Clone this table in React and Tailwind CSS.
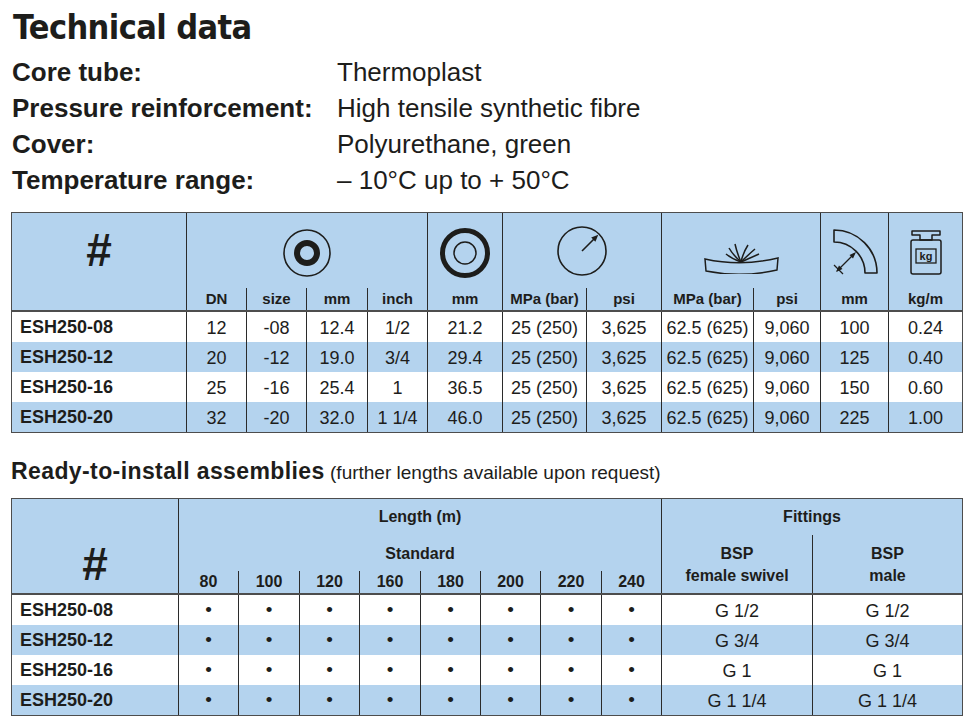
import React from "react";

const LINE = "border-l border-[#2b2b2b]";
const BLUE = "bg-[#b4d3ee]";

const techRows = [
  ["ESH250-08", "12", "-08", "12.4", "1/2", "21.2", "25 (250)", "3,625", "62.5 (625)", "9,060", "100", "0.24"],
  ["ESH250-12", "20", "-12", "19.0", "3/4", "29.4", "25 (250)", "3,625", "62.5 (625)", "9,060", "125", "0.40"],
  ["ESH250-16", "25", "-16", "25.4", "1", "36.5", "25 (250)", "3,625", "62.5 (625)", "9,060", "150", "0.60"],
  ["ESH250-20", "32", "-20", "32.0", "1 1/4", "46.0", "25 (250)", "3,625", "62.5 (625)", "9,060", "225", "1.00"],
];

const lengths = ["80", "100", "120", "160", "180", "200", "220", "240"];

const assemblies = [
  ["ESH250-08", "G 1/2"],
  ["ESH250-12", "G 3/4"],
  ["ESH250-16", "G 1"],
  ["ESH250-20", "G 1 1/4"],
];

const specs = [
  ["Core tube:", "Thermoplast"],
  ["Pressure reinforcement:", "High tensile synthetic fibre"],
  ["Cover:", "Polyurethane, green"],
  ["Temperature range:", "– 10°C up to + 50°C"],
];

function InnerDiameterIcon() {
  return (
    <svg width="50" height="50" viewBox="0 0 50 50" fill="none" stroke="#1d1d1b">
      <circle cx="25" cy="25" r="23" strokeWidth="1.6" />
      <circle cx="25" cy="25" r="10" strokeWidth="6" />
    </svg>
  );
}

function OuterDiameterIcon() {
  return (
    <svg width="52" height="52" viewBox="0 0 52 52" fill="none" stroke="#1d1d1b">
      <circle cx="26" cy="26" r="22.5" strokeWidth="5" />
      <circle cx="26" cy="26" r="11" strokeWidth="1.5" />
    </svg>
  );
}

function PressureIcon() {
  return (
    <svg width="52" height="52" viewBox="0 0 52 52" fill="none" stroke="#1d1d1b">
      <circle cx="26" cy="26" r="24" strokeWidth="1.6" />
      <line x1="26" y1="26" x2="38" y2="14" strokeWidth="1.6" />
      <polygon points="42.3,9.7 39.4,16.7 35.2,12.5" fill="#1d1d1b" stroke="none" />
    </svg>
  );
}

function BurstIcon() {
  return (
    <svg width="80" height="46" viewBox="0 0 80 46" fill="none" stroke="#1d1d1b" strokeWidth="1.5">
      <path d="M4 31 Q40 39 77 30 L76 42 Q40 50 5 43 Z" fill="none" />
      <path d="M40 34 Q31 31 25 26" />
      <path d="M40 34 Q32 27 28 20" />
      <path d="M40 34 Q36 25 34 16" />
      <path d="M40 34 Q42 25 47 17" />
      <path d="M40 34 Q47 27 54 21" />
      <path d="M40 34 Q49 30 58 26" />
    </svg>
  );
}

function BendIcon() {
  return (
    <svg width="50" height="48" viewBox="0 0 50 48" fill="none" stroke="#1d1d1b" strokeWidth="1.6">
      <path d="M4 1 A43 43 0 0 1 47 44 L35 44 A31 31 0 0 0 4 13 Z" strokeLinejoin="round" />
      <line x1="7" y1="42" x2="24" y2="25" strokeWidth="1.3" />
      <polygon points="26,23 19.5,26 23,29.5" fill="#1d1d1b" stroke="none" />
      <polygon points="6,43 12.5,40 9,36.5" fill="#1d1d1b" stroke="none" />
      <line x1="4" y1="36" x2="13" y2="45" strokeWidth="1.3" />
    </svg>
  );
}

function WeightIcon() {
  return (
    <svg width="34" height="48" viewBox="0 0 34 48" fill="none" stroke="#1d1d1b" strokeWidth="1.5">
      <path d="M3 2 H31 V6 H23 V11 H11 V6 H3 Z" strokeLinejoin="round" />
      <rect x="2" y="11" width="30" height="34" rx="2" />
      <rect x="7" y="20" width="20" height="14" strokeWidth="1.3" />
      <text
        x="17"
        y="31"
        textAnchor="middle"
        fontSize="11"
        fontWeight="700"
        fontFamily="Liberation Sans, Arial, sans-serif"
        fill="#1d1d1b"
        stroke="none"
      >
        kg
      </text>
    </svg>
  );
}

function TechTable() {
  const cols = "grid-cols-[174px_60px_60px_61px_60px_75px_84px_75px_92px_67px_68px_74px]";
  const labels = ["DN", "size", "mm", "inch", "mm", "MPa (bar)", "psi", "MPa (bar)", "psi", "mm", "kg/m"];
  return (
    <div className="w-[952px] border border-[#4d4d4d]">
      <div className={`grid ${cols} grid-rows-[75px_22px] ${BLUE} border-b-2 border-[#4d4d4d]`}>
        <div className="row-span-2 flex justify-center pt-[14px] text-[46px] font-bold leading-none">#</div>
        <div className={`col-span-4 flex items-center justify-center pt-[4px] ${LINE}`}>
          <InnerDiameterIcon />
        </div>
        <div className={`flex items-center justify-center pt-[4px] ${LINE}`}>
          <OuterDiameterIcon />
        </div>
        <div className={`col-span-2 flex items-center justify-center pt-[1px] ${LINE}`}>
          <PressureIcon />
        </div>
        <div className={`col-span-2 flex items-center justify-center ${LINE}`}>
          <BurstIcon />
        </div>
        <div className={`flex items-center justify-center pt-[4px] ${LINE}`}>
          <BendIcon />
        </div>
        <div className={`flex items-center justify-center pt-[4px] ${LINE}`}>
          <WeightIcon />
        </div>
        {labels.map((l, i) => (
          <div key={i} className={`flex items-center justify-center text-[15px] font-bold ${LINE}`}>
            {l}
          </div>
        ))}
      </div>
      {techRows.map((row, r) => (
        <div key={r} className={`grid ${cols} h-[30px] ${r % 2 === 1 ? BLUE : "bg-white"}`}>
          {row.map((cell, c) =>
            c === 0 ? (
              <div key={c} className="flex items-center pl-[8px] pt-[1px] text-[18px] font-bold">
                {cell}
              </div>
            ) : (
              <div key={c} className={`flex items-center justify-center pt-[2px] text-[18px] ${LINE}`}>
                {cell}
              </div>
            )
          )}
        </div>
      ))}
    </div>
  );
}

function AssemblyTable() {
  const cols = "grid-cols-[166px_60px_61px_60px_61px_60px_60px_61px_60px_151px_150px]";
  return (
    <div className="w-[952px] border border-[#4d4d4d]">
      <div className={`grid ${cols} grid-rows-[36px_36px_22px] ${BLUE} border-b-2 border-[#4d4d4d]`}>
        <div className="row-span-3 flex justify-center pt-[42px] text-[46px] font-bold leading-none">#</div>
        <div className={`col-span-8 flex items-center justify-center text-[16px] font-bold ${LINE}`}>Length (m)</div>
        <div className={`col-span-2 flex items-center justify-center text-[16px] font-bold ${LINE}`}>Fittings</div>
        <div className={`col-span-8 flex items-center justify-center pt-[2px] text-[16px] font-bold ${LINE}`}>
          Standard
        </div>
        <div
          className={`row-span-2 flex flex-col items-center justify-center pt-[2px] text-[16px] font-bold leading-[22px] ${LINE}`}
        >
          <span>BSP</span>
          <span>female swivel</span>
        </div>
        <div
          className={`row-span-2 flex flex-col items-center justify-center pt-[2px] text-[16px] font-bold leading-[22px] ${LINE}`}
        >
          <span>BSP</span>
          <span>male</span>
        </div>
        {lengths.map((l) => (
          <div key={l} className={`flex items-center justify-center text-[16px] font-bold ${LINE}`}>
            {l}
          </div>
        ))}
      </div>
      {assemblies.map(([code, g], r) => (
        <div key={code} className={`grid ${cols} h-[30px] ${r % 2 === 1 ? BLUE : "bg-white"}`}>
          <div className="flex items-center pl-[8px] pt-[1px] text-[18px] font-bold">{code}</div>
          {lengths.map((l) => (
            <div key={l} className={`flex items-center justify-center text-[19px] ${LINE}`}>
              •
            </div>
          ))}
          <div className={`flex items-center justify-center pt-[2px] text-[18px] ${LINE}`}>{g}</div>
          <div className={`flex items-center justify-center pt-[2px] text-[18px] ${LINE}`}>{g}</div>
        </div>
      ))}
    </div>
  );
}

export default function App() {
  return (
    <div className="min-h-screen w-[975px] bg-white pt-[7px] pl-[11px] font-['Liberation_Sans',Arial,sans-serif] text-[#1d1d1b]">
      <h1 className="pl-[2px] font-['DejaVu_Sans_Condensed','DejaVu_Sans',sans-serif] text-[34px] font-bold leading-[40px] tracking-[-0.6px]">
        Technical data
      </h1>
      <div className="mt-[7px] grid grid-cols-[326px_1fr] text-[26px] leading-[36px]">
        {specs.map(([k, v]) => (
          <React.Fragment key={k}>
            <div className="pl-[1px] font-bold">{k}</div>
            <div>{v}</div>
          </React.Fragment>
        ))}
      </div>
      <div className="mt-[14px]">
        <TechTable />
      </div>
      <p className="mt-[24px] leading-[28px]">
        <span className="text-[23px] font-bold tracking-[0.4px]">Ready-to-install assemblies</span>
        <span className="text-[19px]"> (further lengths available upon request)</span>
      </p>
      <div className="mt-[10px]">
        <AssemblyTable />
      </div>
    </div>
  );
}
